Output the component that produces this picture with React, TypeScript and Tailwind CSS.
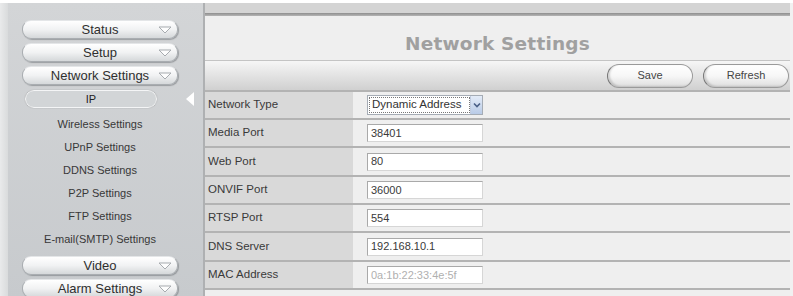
import React from 'react';

const MENU_TOP = ['Status', 'Setup', 'Network Settings'];
const SUB_ITEMS = [
  'Wireless Settings',
  'UPnP Settings',
  'DDNS Settings',
  'P2P Settings',
  'FTP Settings',
  'E-mail(SMTP) Settings',
];
const MENU_BOTTOM = ['Video', 'Alarm Settings'];

const ROWS: Array<{ label: string; value: string; kind: 'select' | 'input' | 'disabled' }> = [
  { label: 'Network Type', value: 'Dynamic Address', kind: 'select' },
  { label: 'Media Port', value: '38401', kind: 'input' },
  { label: 'Web Port', value: '80', kind: 'input' },
  { label: 'ONVIF Port', value: '36000', kind: 'input' },
  { label: 'RTSP Port', value: '554', kind: 'input' },
  { label: 'DNS Server', value: '192.168.10.1', kind: 'input' },
  { label: 'MAC Address', value: '0a:1b:22:33:4e:5f', kind: 'disabled' },
];

function MenuButton({ label }: { label: string }) {
  return (
    <div className="relative ml-[14px] flex h-[19px] w-[156px] items-center justify-center rounded-[9px] border border-[#a9adb1] border-t-[#e4e6e8] bg-gradient-to-b from-[#ffffff] via-[#f1f2f3] to-[#d5d8da] shadow-[1px_1px_1px_rgba(90,95,100,0.45)]">
      <span className="text-[13px] leading-none text-[#2f2f2f]">{label}</span>
      <svg className="absolute right-[5px] top-[5px]" width="14" height="8" viewBox="0 0 14 8">
        <polygon points="1,1 13,1 7,7" fill="#fdfdfd" stroke="#a7abaf" strokeWidth="1" />
      </svg>
    </div>
  );
}

function SaveButton({ label }: { label: string }) {
  return (
    <button
      type="button"
      className="flex h-[24px] w-[86px] items-center justify-center rounded-full border border-[#9a9a9a] border-l-[#777] bg-gradient-to-b from-[#ffffff] via-[#f7f7f7] to-[#dedede] shadow-[inset_2px_-1px_2px_rgba(0,0,0,0.15)]"
    >
      <span className="text-[11px] text-[#444]">{label}</span>
    </button>
  );
}

function Field({ value, kind }: { value: string; kind: 'select' | 'input' | 'disabled' }) {
  if (kind === 'select') {
    return (
      <div className="flex h-[20px] w-[116px] items-center border border-[#a5acb5] bg-white">
        <span className="ml-[1px] flex h-[16px] flex-1 items-center border border-dotted border-[#777] px-[2px] text-[11.5px] text-[#333]">
          {value}
        </span>
        <span className="flex h-[18px] w-[12px] items-center justify-center border-l border-[#c2cde0] bg-gradient-to-b from-[#e4ecf8] to-[#b9cbe7]">
          <svg width="8" height="6" viewBox="0 0 8 6">
            <path d="M1 1.5 L4 4.5 L7 1.5" fill="none" stroke="#4a5f86" strokeWidth="1.6" />
          </svg>
        </span>
      </div>
    );
  }
  return (
    <div className="flex h-[18px] w-[116px] items-center border border-[#a9a9a9] border-b-[#d6d6d6] border-r-[#d6d6d6] bg-white pl-[3px]">
      <span className={`text-[11px] ${kind === 'disabled' ? 'text-[#b0b0b0]' : 'text-[#3a3a3a]'}`}>{value}</span>
    </div>
  );
}

export default function App() {
  return (
    <div className="flex h-[296px] w-[793px] flex-col overflow-hidden bg-[#f3f3f3] font-['Liberation_Sans',Arial,sans-serif]">
      <div className="h-[3px] shrink-0 bg-white" />
      <div className="flex flex-1">
        <div className="w-[8px] shrink-0 bg-gradient-to-r from-[#e9eaeb] to-[#d9dbdc]" />

        <aside className="flex w-[195px] shrink-0 flex-col bg-gradient-to-b from-[#d3d5d7] to-[#c7cacd] pt-[17px]">
          <div className="flex flex-col gap-[4px]">
            {MENU_TOP.map((m) => (
              <MenuButton key={m} label={m} />
            ))}
          </div>
          <div className="mt-[5px] flex items-center">
            <div className="ml-[17px] flex h-[18px] w-[132px] items-center justify-center rounded-full border-[1.5px] border-[#f4f5f6] bg-[#d2d5d7] shadow-[0_0_1px_rgba(80,80,80,0.6)]">
              <span className="text-[11px] text-[#222]">IP</span>
            </div>
            <svg className="ml-[29px]" width="8" height="14" viewBox="0 0 8 14">
              <polygon points="8,0 8,14 0,7" fill="#ffffff" />
            </svg>
          </div>
          <ul className="mt-[5px] flex flex-col">
            {SUB_ITEMS.map((s) => (
              <li key={s} className="ml-[14px] flex h-[23px] w-[156px] items-center justify-center text-[11px] text-[#383838]">
                {s}
              </li>
            ))}
          </ul>
          <div className="mt-[5px] flex flex-col gap-[4px]">
            {MENU_BOTTOM.map((m) => (
              <MenuButton key={m} label={m} />
            ))}
          </div>
        </aside>

        <main className="flex w-[587px] shrink-0 flex-col border-l-2 border-[#aeb0b2] bg-[#efefef]">
          <div className="h-[10px] shrink-0 bg-[#d4d4d4]" />
          <div className="h-[3px] shrink-0 bg-gradient-to-b from-[#8e8e8e] to-[#b5b5b5]" />
          <div className="flex h-[45px] shrink-0 items-end justify-center border-b border-[#c4c4c4] pb-[2px]">
            <h1 className="font-['DejaVu_Sans',Verdana,sans-serif] text-[18.5px] font-bold tracking-[0.2px] text-[#a0a0a0]">
              Network Settings
            </h1>
          </div>
          <div className="flex h-[31px] shrink-0 items-center justify-end gap-[10px] border-b-2 border-[#b3b3b3] bg-gradient-to-b from-[#f6f6f6] to-[#d0d0d0] pr-[1px]">
            <SaveButton label="Save" />
            <SaveButton label="Refresh" />
          </div>
          {ROWS.map((r, i) => (
            <div
              key={r.label}
              className={`flex shrink-0 border-b-2 border-[#b3b3b3] ${i % 3 === 2 ? 'h-[29px]' : 'h-[28px]'}`}
            >
              <div className="flex w-[148px] items-center bg-[#d9d9d9] pl-[3px] text-[11.5px] text-[#3a3a3a]">
                {r.label}
              </div>
              <div className="flex flex-1 items-center bg-[#efefef] pl-[14px]">
                <Field value={r.value} kind={r.kind} />
              </div>
            </div>
          ))}
        </main>

        <div className="flex-1 bg-[#f1f1f1]" />
      </div>
    </div>
  );
}
